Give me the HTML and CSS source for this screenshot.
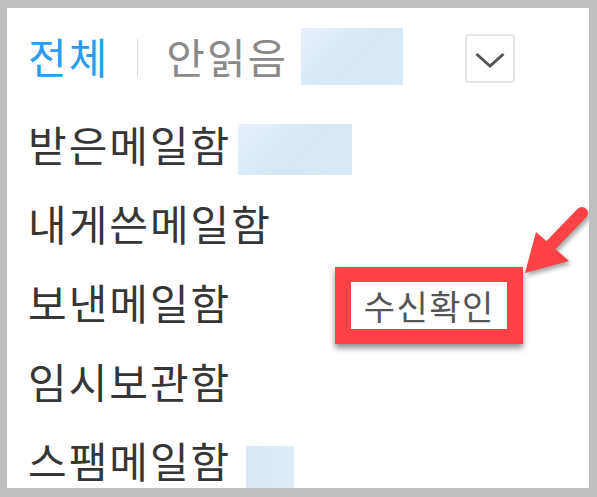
FILE: index.html
```html
<!DOCTYPE html>
<html lang="ko">
<head>
<meta charset="utf-8">
<title>메일함</title>
<link rel="stylesheet" href="styles.css">
</head>
<body>
<div class="panel">
  <div class="header">
    <span class="tab tab-active">전체</span>
    <span class="divider"></span>
    <span class="tab tab-unread">안읽음</span>
    <span class="blur blur-unread"></span>
    <span class="dropdown">
      <svg class="chevron" width="30" height="16" viewBox="0 0 30 16"><polyline points="1.5,2 15,14 28.5,2" fill="none" stroke="#555" stroke-width="3"/></svg>
    </span>
  </div>
  <div class="row"><span class="name">받은메일함</span><span class="blur blur-inbox"></span></div>
  <div class="row"><span class="name">내게쓴메일함</span></div>
  <div class="row"><span class="name">보낸메일함</span><span class="receipt">수신확인</span></div>
  <div class="row"><span class="name">임시보관함</span></div>
  <div class="row"><span class="name">스팸메일함</span><span class="blur blur-spam"></span></div>
  <svg class="arrow" width="96" height="100" viewBox="0 0 96 100">
    <g class="arrow-shape">
      <line x1="82" y1="23" x2="50" y2="56" stroke="#fd4246" stroke-width="12" stroke-linecap="round"/>
      <polygon points="36,42 69,71 25,83" fill="#fd4246"/>
    </g>
  </svg>
</div>
</body>
</html>
```
FILE: styles.css
```css
html, body {
  margin: 0;
  padding: 0;
  background: #c0c0c0;
}
body {
  font-family: "Noto Sans CJK KR", "Noto Sans", sans-serif;
}
.panel {
  position: relative;
  margin: 8px 0 0 7px;
  width: 582px;
  height: 480px;
  background: #fff;
  overflow: hidden;
}
.header {
  display: flex;
  align-items: center;
  height: 96px;
  padding-left: 21px;
  font-size: 42px;
  letter-spacing: 2px;
}
.tab {
  line-height: 1;
}
.tab-active {
  color: #2b9cf0;
}
.tab-unread {
  color: #8a8a8a;
}
.divider {
  width: 1px;
  height: 38px;
  margin: 4px 28px 0 28px;
  background: #dcdcdc;
}
.blur {
  display: block;
  align-self: flex-start;
  background: linear-gradient(135deg, #e8f1fb 0%, #d6e7f7 55%, #dbeaf8 100%);
}
.blur-unread {
  width: 102px;
  height: 57px;
  margin: 20px 0 0 13px;
}
.dropdown {
  display: flex;
  align-items: center;
  justify-content: center;
  width: 50px;
  height: 49px;
  box-sizing: border-box;
  margin: 5px 0 0 62px;
  border: 2px solid #e6e6e6;
  border-radius: 4px;
}
.chevron {
  display: block;
  margin-top: 2px;
}
.row {
  display: flex;
  align-items: center;
  height: 79px;
  padding-left: 21px;
  font-size: 42px;
  letter-spacing: 2px;
  color: #363636;
}
.name {
  line-height: 1;
}
.blur-inbox {
  width: 114px;
  height: 51px;
  margin: 20px 0 0 7px;
}
.blur-spam {
  width: 48px;
  height: 50px;
  margin: 26px 0 0 15px;
  background: linear-gradient(90deg, #d8e8f7, #e0edf9);
}
.receipt {
  display: flex;
  align-items: center;
  justify-content: center;
  align-self: flex-start;
  box-sizing: border-box;
  width: 188px;
  height: 77px;
  margin: 5px 0 0 104px;
  border-style: solid;
  border-color: #fd4246;
  border-width: 15px 16px;
  background: #fff;
  color: #555;
  font-size: 34px;
  letter-spacing: 1.5px;
  line-height: 1;
  box-shadow: 0 4px 6px rgba(0, 0, 0, 0.45);
}
.arrow {
  position: absolute;
  left: 493px;
  top: 182px;
  overflow: visible;
}
.arrow-shape {
  filter: drop-shadow(2px 3px 2px rgba(0, 0, 0, 0.35));
}
```
